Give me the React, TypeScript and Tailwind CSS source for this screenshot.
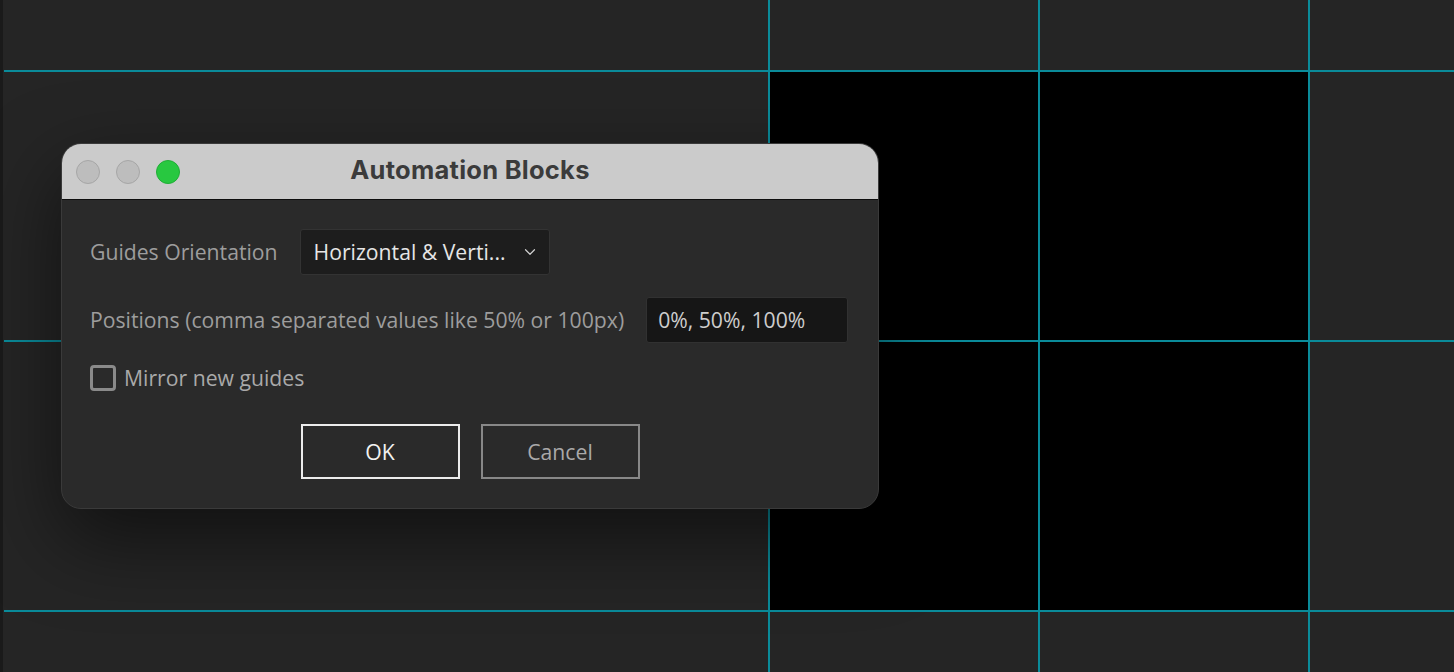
import { ChevronDown } from 'lucide-react';

const guideColor = 'bg-[#0a8b9a]';

const TrafficLight = ({ color }: { color: string }) => (
  <span className={`block h-[24px] w-[24px] rounded-full border ${color}`} />
);

const App = () => {
  return (
    <div className="relative h-[672px] w-[1454px] overflow-hidden bg-[#252525] font-['Open_Sans',sans-serif]">
      {/* left panel edge */}
      <div className="absolute left-0 top-0 h-full w-[3px] bg-[#1a1a1a]" />

      {/* composition area */}
      <div className="absolute left-[770px] top-[72px] h-[538px] w-[538px] bg-black" />

      {/* guides */}
      <div className={`absolute left-[4px] right-0 top-[70px] h-[2px] ${guideColor}`} />
      <div className={`absolute left-[4px] right-0 top-[340px] h-[2px] ${guideColor}`} />
      <div className={`absolute left-[4px] right-0 top-[610px] h-[2px] ${guideColor}`} />
      <div className={`absolute bottom-0 top-0 left-[768px] w-[2px] ${guideColor}`} />
      <div className={`absolute bottom-0 top-0 left-[1038px] w-[2px] ${guideColor}`} />
      <div className={`absolute bottom-0 top-0 left-[1308px] w-[2px] ${guideColor}`} />

      {/* dialog window */}
      <div className="absolute left-[61px] top-[143px] flex w-[818px] flex-col overflow-hidden rounded-[20px] border border-[#3a3a3a] bg-[#2a2a2a] shadow-[0_30px_80px_rgba(0,0,0,0.55)]">
        <div className="relative flex h-[56px] items-center border-b border-[#0e0e0e] bg-[#cbcbcb] px-[14px]">
          <div className="z-10 flex items-center gap-[16px]">
            <TrafficLight color="bg-[#bdbdbd] border-[#a6a6a6]" />
            <TrafficLight color="bg-[#bdbdbd] border-[#a6a6a6]" />
            <TrafficLight color="bg-[#28c840] border-[#20ad36]" />
          </div>
          <h1 className="absolute inset-x-0 -mt-[2px] text-center font-['Inter',sans-serif] text-[25.5px] font-bold tracking-[0.01em] text-[#3b3b3b]">
            Automation Blocks
          </h1>
        </div>

        <div className="flex flex-col px-[28px] pb-[29px] pt-[29px] text-[21.2px] leading-[28px]">
          <div className="flex items-center gap-[22px]">
            <span className="text-[#9d9d9d]">Guides Orientation</span>
            <div className="flex h-[46px] w-[250px] items-center justify-between rounded-[3px] border border-[#333] bg-[#1d1d1d] pl-[13px] pr-[10px] text-[#e6e6e6]">
              <span>Horizontal &amp; Verti...</span>
              <ChevronDown size={18} strokeWidth={1.6} className="text-[#cfcfcf]" />
            </div>
          </div>

          <div className="mt-[22px] flex items-center gap-[22px]">
            <span className="text-[#9d9d9d]">Positions (comma separated values like 50% or 100px)</span>
            <div className="flex h-[46px] w-[202px] items-center rounded-[3px] border border-[#313131] bg-[#161616] px-[11px] text-[#cdcdcd]">
              0%, 50%, 100%
            </div>
          </div>

          <label className="mt-[22px] flex h-[26px] items-center gap-[8px]">
            <span className="block h-[26px] w-[26px] rounded-[4px] border-[3px] border-[#8a8a8a]" />
            <span className="text-[#a9a9a9]">Mirror new guides</span>
          </label>

          <div className="mt-[33px] flex justify-center gap-[21px]">
            <button className="h-[55px] w-[159px] border-2 border-[#ececec] text-[#f2f2f2]">OK</button>
            <button className="h-[55px] w-[159px] border-2 border-[#888] text-[#a9a9a9]">Cancel</button>
          </div>
        </div>
      </div>
    </div>
  );
};

export default App;
